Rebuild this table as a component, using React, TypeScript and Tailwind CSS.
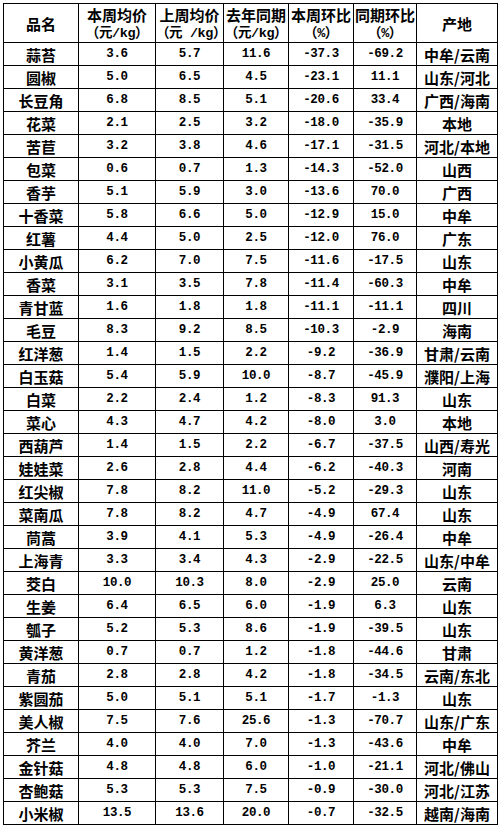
const rows: string[][] = [
  ["蒜苔", "3.6", "5.7", "11.6", "-37.3", "-69.2", "中牟/云南"],
  ["圆椒", "5.0", "6.5", "4.5", "-23.1", "11.1", "山东/河北"],
  ["长豆角", "6.8", "8.5", "5.1", "-20.6", "33.4", "广西/海南"],
  ["花菜", "2.1", "2.5", "3.2", "-18.0", "-35.9", "本地"],
  ["苦苣", "3.2", "3.8", "4.6", "-17.1", "-31.5", "河北/本地"],
  ["包菜", "0.6", "0.7", "1.3", "-14.3", "-52.0", "山西"],
  ["香芋", "5.1", "5.9", "3.0", "-13.6", "70.0", "广西"],
  ["十香菜", "5.8", "6.6", "5.0", "-12.9", "15.0", "中牟"],
  ["红薯", "4.4", "5.0", "2.5", "-12.0", "76.0", "广东"],
  ["小黄瓜", "6.2", "7.0", "7.5", "-11.6", "-17.5", "山东"],
  ["香菜", "3.1", "3.5", "7.8", "-11.4", "-60.3", "中牟"],
  ["青甘蓝", "1.6", "1.8", "1.8", "-11.1", "-11.1", "四川"],
  ["毛豆", "8.3", "9.2", "8.5", "-10.3", "-2.9", "海南"],
  ["红洋葱", "1.4", "1.5", "2.2", "-9.2", "-36.9", "甘肃/云南"],
  ["白玉菇", "5.4", "5.9", "10.0", "-8.7", "-45.9", "濮阳/上海"],
  ["白菜", "2.2", "2.4", "1.2", "-8.3", "91.3", "山东"],
  ["菜心", "4.3", "4.7", "4.2", "-8.0", "3.0", "本地"],
  ["西葫芦", "1.4", "1.5", "2.2", "-6.7", "-37.5", "山西/寿光"],
  ["娃娃菜", "2.6", "2.8", "4.4", "-6.2", "-40.3", "河南"],
  ["红尖椒", "7.8", "8.2", "11.0", "-5.2", "-29.3", "山东"],
  ["菜南瓜", "7.8", "8.2", "4.7", "-4.9", "67.4", "山东"],
  ["茼蒿", "3.9", "4.1", "5.3", "-4.9", "-26.4", "中牟"],
  ["上海青", "3.3", "3.4", "4.3", "-2.9", "-22.5", "山东/中牟"],
  ["茭白", "10.0", "10.3", "8.0", "-2.9", "25.0", "云南"],
  ["生姜", "6.4", "6.5", "6.0", "-1.9", "6.3", "山东"],
  ["瓠子", "5.2", "5.3", "8.6", "-1.9", "-39.5", "山东"],
  ["黄洋葱", "0.7", "0.7", "1.2", "-1.8", "-44.6", "甘肃"],
  ["青茄", "2.8", "2.8", "4.2", "-1.8", "-34.5", "云南/东北"],
  ["紫圆茄", "5.0", "5.1", "5.1", "-1.7", "-1.3", "山东"],
  ["美人椒", "7.5", "7.6", "25.6", "-1.3", "-70.7", "山东/广东"],
  ["芥兰", "4.0", "4.0", "7.0", "-1.3", "-43.6", "中牟"],
  ["金针菇", "4.8", "4.8", "6.0", "-1.0", "-21.1", "河北/佛山"],
  ["杏鲍菇", "5.3", "5.3", "7.5", "-0.9", "-30.0", "河北/江苏"],
  ["小米椒", "13.5", "13.6", "20.0", "-0.7", "-32.5", "越南/海南"],
];

const headers: [string, string | null][] = [
  ["品名", null],
  ["本周均价", "（元/kg）"],
  ["上周均价", "（元 /kg）"],
  ["去年同期", "（元/kg）"],
  ["本周环比", "（%）"],
  ["同期环比", "（%）"],
  ["产地", null],
];

const cols = "grid grid-cols-[75px_77px_68px_65px_65px_63px_81px]";
const cjk = "font-['Noto_Sans_CJK_SC',sans-serif] font-bold text-[15px]";
const mono = "font-['Liberation_Mono','Noto_Sans_CJK_SC',monospace] font-bold text-[12.5px] tracking-[-0.4px]";

export default function App() {
  return (
    <div className="w-[500px] h-[830px] bg-white pt-[3px] pl-[3px] text-black">
      <div className="w-[495px] border-l border-t border-black">
        <div className={cols}>
          {headers.map(([top, sub]) =>
            sub ? (
              <div
                key={top}
                className="h-[39px] border-r border-b border-black flex flex-col items-center justify-start"
              >
                <span className={`${cjk} block leading-[22px]`}>{top}</span>
                <span className="block font-['Liberation_Mono','Noto_Sans_CJK_SC',monospace] font-bold text-[13.5px] leading-[16px] tracking-[-0.4px]">
                  {sub}
                </span>
              </div>
            ) : (
              <div
                key={top}
                className={`h-[39px] border-r border-b border-black flex items-center justify-center leading-none ${cjk}`}
              >
                {top}
              </div>
            )
          )}
        </div>
        {rows.map((r) => (
          <div key={r[0]} className={cols}>
            {r.map((v, i) => (
              <div
                key={i}
                className={`h-[23px] border-r border-b border-black flex items-center justify-center leading-none ${
                  i === 0 || i === 6 ? cjk : mono
                }`}
              >
                {v}
              </div>
            ))}
          </div>
        ))}
      </div>
    </div>
  );
}
